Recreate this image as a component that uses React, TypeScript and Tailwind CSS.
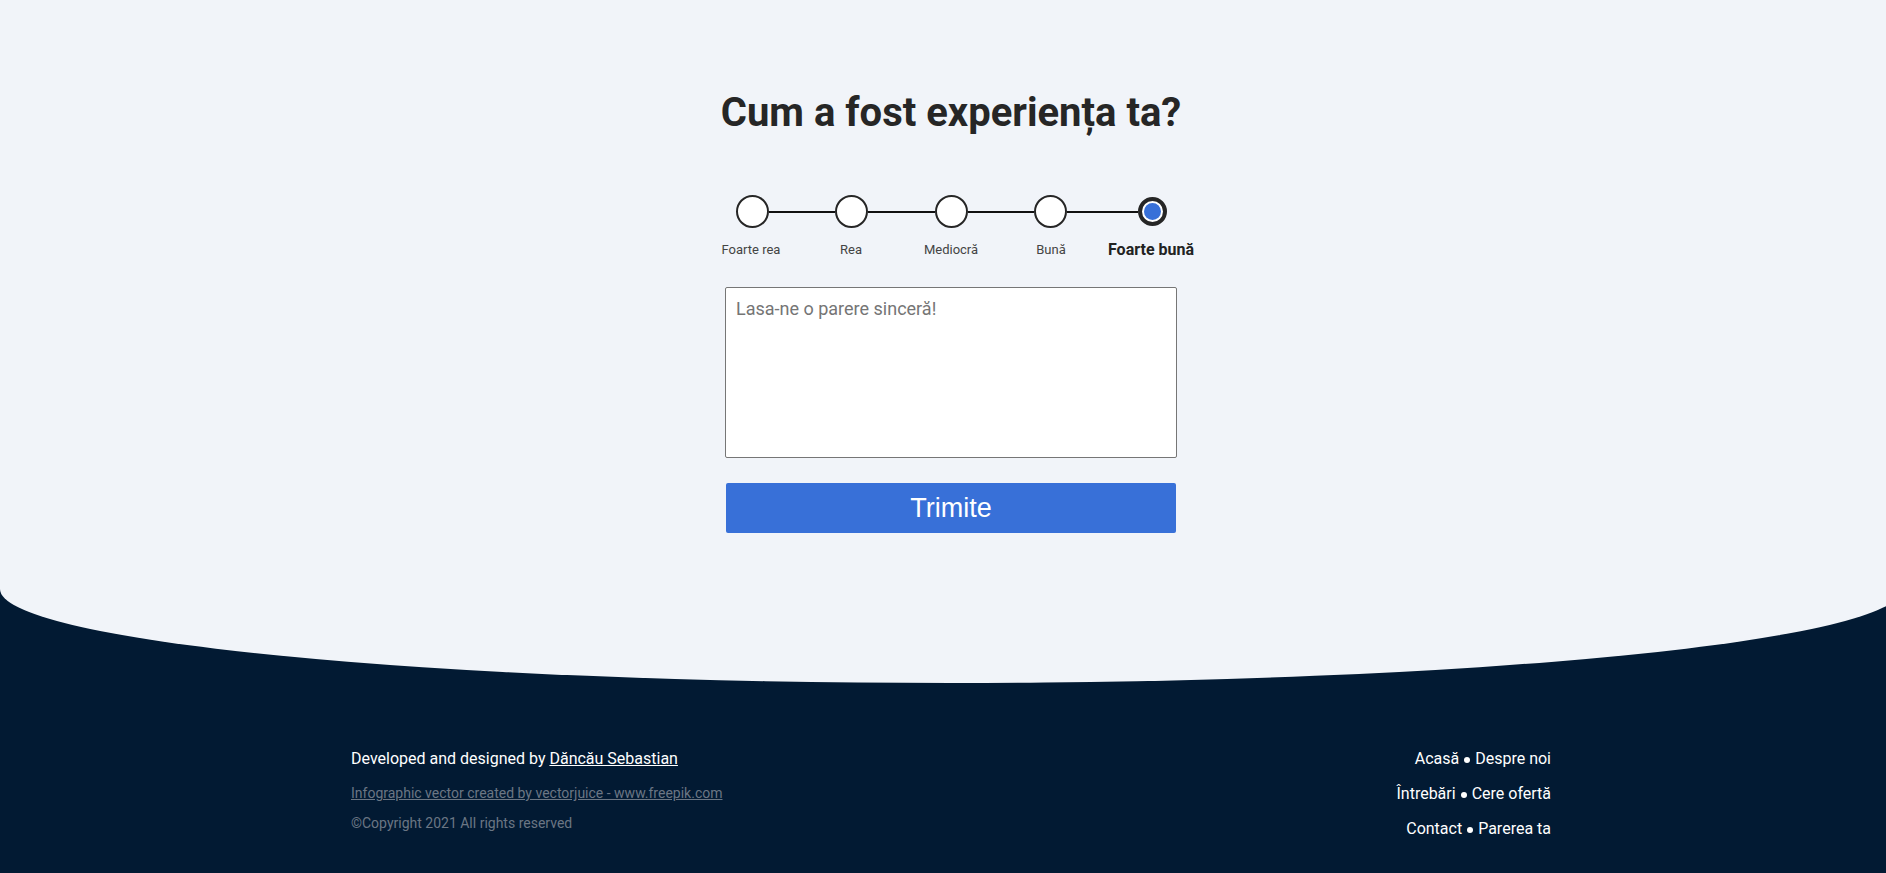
import { useState } from 'react';

const options = ['Foarte rea', 'Rea', 'Mediocră', 'Bună', 'Foarte bună'];

const links = [
  ['Acasă', 'Despre noi'],
  ['Întrebări', 'Cere ofertă'],
  ['Contact', 'Parerea ta'],
];

export default function App() {
  const [rating, setRating] = useState(4);
  const [text, setText] = useState('');

  return (
    <div className="min-h-screen overflow-hidden bg-[#021a33] font-['Roboto',sans-serif]">
      <div className="w-[1902px]">
        <section className="flex h-[683px] flex-col items-center rounded-b-[50%_94px] bg-[#f1f4f9] pt-[89px]">
          <h1 className="text-[40px] font-bold leading-[48px] text-[#262626]">Cum a fost experiența ta?</h1>

          <div className="mt-[58px] flex w-[431px] items-center">
            {options.map((o, i) => (
              <div key={o} className={i === 0 ? 'flex items-center' : 'flex flex-1 items-center'}>
                {i > 0 && <div className="h-[2px] flex-1 bg-[#111]" />}
                {i === rating ? (
                  <button
                    onClick={() => setRating(i)}
                    className="flex h-[29px] w-[29px] items-center justify-center rounded-full border-4 border-[#262626] bg-white"
                  >
                    <span className="h-[17px] w-[17px] rounded-full bg-[#3870d8]" />
                  </button>
                ) : (
                  <button
                    onClick={() => setRating(i)}
                    className="h-[33px] w-[33px] rounded-full border-2 border-[#262626] bg-white"
                  />
                )}
              </div>
            ))}
          </div>

          <div className="mt-3 flex w-[500px]">
            {options.map((o, i) => (
              <div
                key={o}
                className={
                  i === rating
                    ? 'w-[100px] text-center text-[16px] font-bold leading-5 text-[#222]'
                    : 'w-[100px] text-center text-[13px] leading-5 text-[#444]'
                }
              >
                {o}
              </div>
            ))}
          </div>

          <textarea
            value={text}
            onChange={(e) => setText(e.target.value)}
            placeholder="Lasa-ne o parere sinceră!"
            className="mt-[27px] h-[171px] w-[452px] resize-none rounded-[2px] border border-[#767676] bg-white p-[10px] text-[18px] leading-[21px] text-[#222] placeholder:text-[#757575]"
          />

          <button className="mt-[25px] h-[50px] w-[450px] rounded-[2px] bg-[#3870d8] font-['Liberation_Sans',Arial,sans-serif] text-[27px] text-white">
            Trimite
          </button>
        </section>

        <footer className="mx-auto flex h-[190px] w-[1200px] justify-between pt-[64px]">
          <div className="flex flex-col">
            <p className="text-[16px] leading-6 text-white">
              Developed and designed by <a href="#" className="underline">Dăncău Sebastian</a>
            </p>
            <a href="#" className="mt-3 text-[14px] leading-5 text-[#6b7684] underline">
              Infographic vector created by vectorjuice - www.freepik.com
            </a>
            <p className="mt-[10px] text-[14px] leading-5 text-[#6b7684]">©Copyright 2021 All rights reserved</p>
          </div>
          <div className="flex flex-col items-end gap-[11px] text-[16px] leading-6 text-white">
            {links.map(([a, b]) => (
              <p key={a}>
                <a href="#">{a}</a>
                <span className="mx-[5px] inline-block h-[6px] w-[6px] rounded-full bg-white align-middle" />
                <a href="#">{b}</a>
              </p>
            ))}
          </div>
        </footer>
      </div>
    </div>
  );
}
